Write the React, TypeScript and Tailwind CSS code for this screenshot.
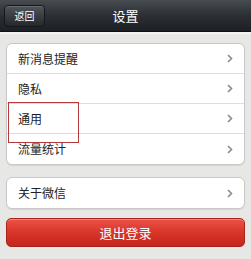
import React from 'react';

const font = { fontFamily: '"Noto Sans CJK SC", "Noto Sans", sans-serif' };

const Chevron = () => (
    <svg width="6" height="9" viewBox="0 0 6 9" className="text-[#8a8a8a]">
        <path d="M1 1l3.5 3.5L1 8" fill="none" stroke="currentColor" strokeWidth="1.6" />
    </svg>
);

const Row = ({ label, last }: { label: string; last?: boolean }) => (
    <div className={`h-[30px] flex items-center justify-between pl-[11px] pr-[11px] ${last ? '' : 'border-b border-[#dedede]'}`}>
        <span className="text-[12px] text-[#222] leading-none">{label}</span>
        <Chevron />
    </div>
);

const App = () => {
    return (
        <div className="w-[251px] h-[259px] bg-[#e7e7e5] overflow-hidden" style={font}>
            {/* Header */}
            <div className="h-[32px] bg-gradient-to-b from-[#474c51] via-[#2c3034] to-[#1c2024] relative flex items-center justify-center border-b border-[#111]">
                <div className="absolute left-[4px] top-[5px] h-[22px] w-[41px] flex items-center justify-center rounded-[4px] bg-gradient-to-b from-[#50555a] to-[#24282c] border border-[#15181b] shadow-[inset_0_1px_0_rgba(255,255,255,0.15)]">
                    <span className="text-[10px] text-white leading-none">返回</span>
                </div>
                <span className="text-[13px] text-white leading-none">设置</span>
            </div>
            <div className="h-[2px] bg-[#f2f2f2]" />

            <div className="px-[6px] pt-[9px] flex flex-col gap-[12px]">
                {/* Group 1 */}
                <div className="relative bg-white border border-[#c9c9c9] rounded-[6px] shadow-[0_1px_1px_rgba(0,0,0,0.08)]">
                    <Row label="新消息提醒" />
                    <Row label="隐私" />
                    <Row label="通用" />
                    <Row label="流量统计" last />
                    <div className="absolute left-[1px] top-[58px] w-[71px] h-[41px] border border-[#b33b3b]" />
                </div>

                {/* Group 2 */}
                <div className="bg-white border border-[#c9c9c9] rounded-[6px] shadow-[0_1px_1px_rgba(0,0,0,0.08)]">
                    <Row label="关于微信" last />
                </div>

                {/* Logout */}
                <div className="mt-[-3px] h-[29px] rounded-[5px] border border-[#a8231c] bg-gradient-to-b from-[#ec5247] via-[#d9342a] to-[#c4261e] flex items-center justify-center shadow-[inset_0_1px_0_rgba(255,255,255,0.3)]">
                    <span className="text-[13px] text-white leading-none">退出登录</span>
                </div>
            </div>
        </div>
    );
};

export default App;
